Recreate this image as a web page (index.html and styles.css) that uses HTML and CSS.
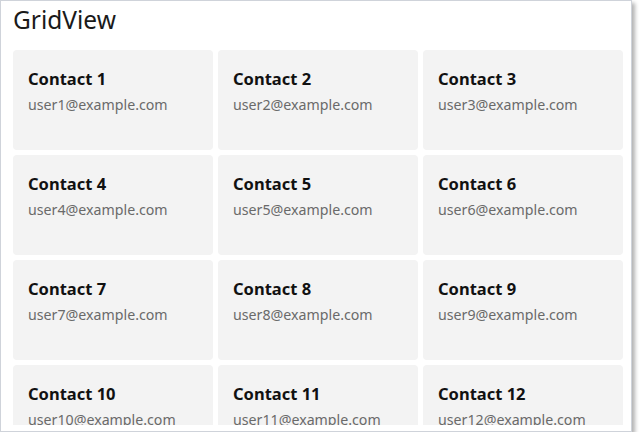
FILE: index.html
```html
<!DOCTYPE html>
<html lang="en">
<head>
    <meta charset="utf-8"/>
    <meta name="viewport" content="width=device-width, initial-scale=1"/>
    <title>GridView</title>
    <link rel="stylesheet" href="styles.css">
</head>
<body>
    <div class="window">
        <h1 class="title">GridView</h1>
        <div class="grid">
            <div class="card"><div class="name">Contact 1</div><div class="mail">user1@example.com</div></div>
            <div class="card"><div class="name">Contact 2</div><div class="mail">user2@example.com</div></div>
            <div class="card"><div class="name">Contact 3</div><div class="mail">user3@example.com</div></div>
            <div class="card"><div class="name">Contact 4</div><div class="mail">user4@example.com</div></div>
            <div class="card"><div class="name">Contact 5</div><div class="mail">user5@example.com</div></div>
            <div class="card"><div class="name">Contact 6</div><div class="mail">user6@example.com</div></div>
            <div class="card"><div class="name">Contact 7</div><div class="mail">user7@example.com</div></div>
            <div class="card"><div class="name">Contact 8</div><div class="mail">user8@example.com</div></div>
            <div class="card"><div class="name">Contact 9</div><div class="mail">user9@example.com</div></div>
            <div class="card"><div class="name">Contact 10</div><div class="mail">user10@example.com</div></div>
            <div class="card"><div class="name">Contact 11</div><div class="mail">user11@example.com</div></div>
            <div class="card"><div class="name">Contact 12</div><div class="mail">user12@example.com</div></div>
        </div>
    </div>
</body>
</html>
```

FILE: styles.css
```css
html, body {
    margin: 0;
    padding: 0;
    background: #ffffff;
}
body {
    font-family: "Noto Sans", "Open Sans", sans-serif;
}
.window {
    box-sizing: border-box;
    width: 632px;
    height: 432px;
    border: 1px solid #cfd3da;
    background: #ffffff;
    box-shadow: 3px 3px 4px rgba(0, 0, 0, 0.3);
    overflow: hidden;
}
.title {
    margin: 0;
    padding: 3px 0 0 12px;
    height: 49px;
    box-sizing: border-box;
    font-size: 24.5px;
    font-weight: 400;
    line-height: 32px;
    color: #1a1a1a;
}
.grid {
    display: grid;
    grid-template-columns: repeat(3, 200px);
    grid-auto-rows: 100px;
    gap: 5px;
    padding-left: 12px;
    height: 375px;
    overflow: hidden;
}
.card {
    background: #f3f3f3;
    border-radius: 4px;
    padding: 17px 15px 0 15px;
}
.name {
    font-size: 16.5px;
    font-weight: 700;
    line-height: 24px;
    color: #111111;
}
.mail {
    margin-top: 1px;
    font-size: 14.2px;
    line-height: 26px;
    color: #6a6a6a;
}
```
